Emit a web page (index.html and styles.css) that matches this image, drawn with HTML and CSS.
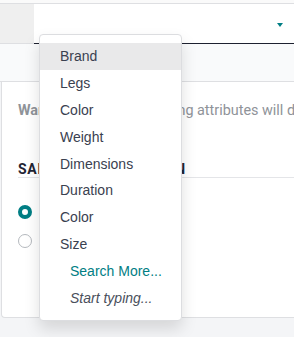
FILE: index.html
```html
<!DOCTYPE html>
<html>
<head>
<meta charset="utf-8">
<link rel="stylesheet" href="styles.css">
</head>
<body>
<div class="page">
  <div class="top-strip"></div>
  <div class="row row-edit">
    <div class="handle-cell"></div>
    <div class="input-cell">
      <span class="caret"></span>
    </div>
  </div>
  <div class="row row-empty"></div>
  <div class="card">
    <p class="warning"><b>Warning</b>: adding or deleting attributes will delete and recreate existing variants</p>
    <h3 class="section-title">SALES CONFIGURATION</h3>
    <div class="radios">
      <label class="radio-line"><span class="radio checked"></span><span class="radio-label">Radio</span></label>
      <label class="radio-line"><span class="radio"></span><span class="radio-label alt">Pills</span></label>
    </div>
  </div>
</div>
<ul class="dropdown">
  <li class="item active">Brand</li>
  <li class="item">Legs</li>
  <li class="item">Color</li>
  <li class="item">Weight</li>
  <li class="item">Dimensions</li>
  <li class="item">Duration</li>
  <li class="item">Color</li>
  <li class="item">Size</li>
  <li class="item more">Search More...</li>
  <li class="item hint">Start typing...</li>
</ul>
</body>
</html>
```
FILE: styles.css
```css
html, body {
  margin: 0;
  padding: 0;
}
body {
  background: #f4f5f7;
  font-family: Roboto, "Liberation Sans", sans-serif;
  width: 294px;
  height: 337px;
  overflow: hidden;
  position: relative;
}
.page {
  display: flex;
  flex-direction: column;
  overflow: hidden;
}
.top-strip {
  height: 3px;
  background: #fafafa;
  border-bottom: 1px solid #dedfe2;
}
.row {
  display: flex;
}
.row-edit {
  height: 40px;
}
.handle-cell {
  width: 34px;
  background: #efefef;
  border-bottom: 1px solid #dedfe2;
}
.input-cell {
  flex: 1;
  background: #ffffff;
  border-bottom: 1px solid #1d2130;
  position: relative;
}
.caret {
  position: absolute;
  left: 243px;
  top: 19px;
  width: 0;
  height: 0;
  border-left: 3.5px solid transparent;
  border-right: 3.5px solid transparent;
  border-top: 4px solid #017e84;
}
.row-empty {
  height: 37px;
  background: #f9fafb;
  border-bottom: 1px solid #dedfe2;
}
.card {
  margin-left: 1px;
  background: #ffffff;
  border-left: 1px solid #dedfe2;
  border-bottom: 1px solid #dedfe2;
  border-bottom-left-radius: 4px;
  height: 235px;
  padding: 0 0 0 16px;
  overflow: hidden;
}
.warning {
  margin: 20px 0 0 0;
  font-size: 14.4px;
  line-height: 18px;
  color: #8f9399;
  white-space: nowrap;
}
.warning b {
  font-weight: 700;
}
.section-title {
  margin: 41px 0 0 0;
  padding: 0;
  font-size: 14px;
  line-height: 16px;
  letter-spacing: 0.7px;
  font-weight: 700;
  color: #1f2433;
  border-bottom: 1px solid #e4e5e8;
  white-space: nowrap;
}
.radios {
  margin-top: 27px;
  display: flex;
  flex-direction: column;
  gap: 15px;
}
.radio-line {
  display: flex;
  align-items: center;
  gap: 8px;
  height: 14px;
  font-size: 14px;
}
.radio {
  box-sizing: border-box;
  width: 14px;
  height: 14px;
  border-radius: 50%;
  border: 1px solid #b5b9be;
  background: #fff;
}
.radio.checked {
  border: 4px solid #017e84;
}
.radio-label {
  color: #374151;
}
.radio-label.alt {
  color: #f0a43c;
}
.dropdown {
  position: absolute;
  left: 39px;
  top: 34px;
  width: 143px;
  height: 287px;
  box-sizing: border-box;
  margin: 0;
  padding: 8px 0 0 0;
  list-style: none;
  background: #ffffff;
  border: 1px solid #dcdde0;
  border-radius: 4px;
  box-shadow: 0 8px 16px rgba(0, 0, 0, 0.13);
  font-family: "Liberation Sans", Arial, sans-serif;
  font-size: 14px;
}
.item {
  height: 26.8px;
  display: flex;
  align-items: center;
  padding-left: 20px;
  color: #3a4150;
}
.item.active {
  background: #e9e9ea;
}
.item.more {
  padding-left: 30px;
  color: #017e84;
}
.item.hint {
  padding-left: 30px;
  font-style: italic;
  color: #4a505c;
}
```
